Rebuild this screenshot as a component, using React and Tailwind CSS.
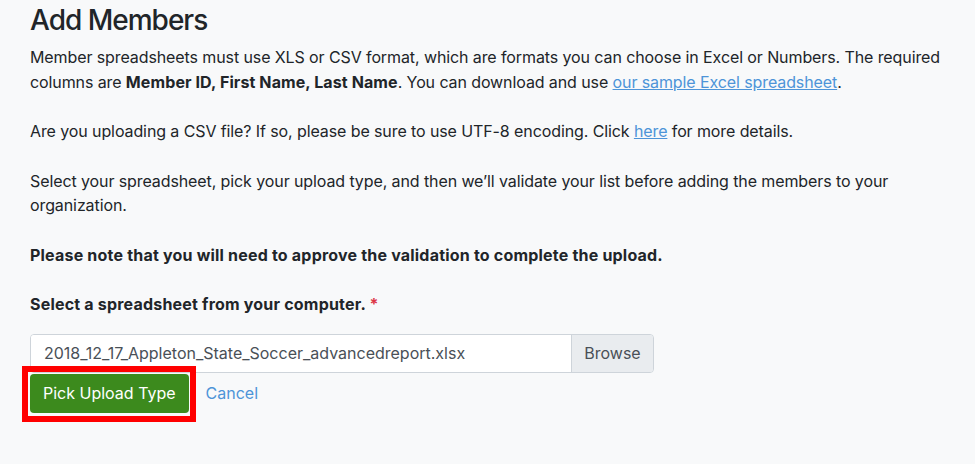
export default function App() {
    return (
        <div className="min-h-[464px] w-full bg-[#f8f9fa] text-[#212529] font-['Inter',sans-serif]">
            <div className="px-[30px] pt-[3px]">
                <h1 className="text-[28px] leading-[34px] font-medium tracking-[-1px] mb-[8px]">Add Members</h1>
                <div className="text-[16px] leading-[24.5px] tracking-[-0.1px]">
                    <p className="mb-[25px]">
                        Member spreadsheets must use XLS or CSV format, which are formats you can choose in Excel or Numbers. The required columns are <span className="font-bold tracking-[0.1px]">Member ID, First Name, Last Name</span>. You can download and use <a href="#" className="text-[#4d94d8] underline">our sample Excel spreadsheet</a>.
                    </p>
                    <p className="mb-[25px]">
                        Are you uploading a CSV file? If so, please be sure to use UTF-8 encoding. Click <a href="#" className="text-[#4d94d8] underline">here</a> for more details.
                    </p>
                    <p className="mb-[25px] pr-[40px]">
                        Select your spreadsheet, pick your upload type, and then we’ll validate your list before adding the members to your organization.
                    </p>
                    <p className="mb-[25px] font-bold tracking-[0.2px]">
                        Please note that you will need to approve the validation to complete the upload.
                    </p>
                    <p className="mb-[17px] font-bold tracking-[0.2px]">
                        Select a spreadsheet from your computer. <span className="text-[#dc3545]">*</span>
                    </p>
                </div>
                <div className="flex w-[624px] h-[39px] rounded-[4px] border border-[#ced4da] overflow-hidden text-[16px] text-[#495057]">
                    <div className="flex-1 bg-white flex items-center px-[13px]">2018_12_17_Appleton_State_Soccer_advancedreport.xlsx</div>
                    <div className="w-[82px] bg-[#e9ecef] border-l border-[#ced4da] flex items-center justify-center">Browse</div>
                </div>
                <div className="flex items-center gap-[17px] mt-[1px]">
                    <div className="relative">
                        <button className="h-[39px] px-[13px] rounded-[4px] bg-[#3c8a1d] text-white text-[16px]">Pick Upload Type</button>
                        <div className="absolute left-[-8px] top-[-8px] right-[-7px] bottom-[-9px] border-[6px] border-[#ff0000] pointer-events-none"></div>
                    </div>
                    <a href="#" className="text-[16px] text-[#4d94d8]">Cancel</a>
                </div>
            </div>
        </div>
    );
}
